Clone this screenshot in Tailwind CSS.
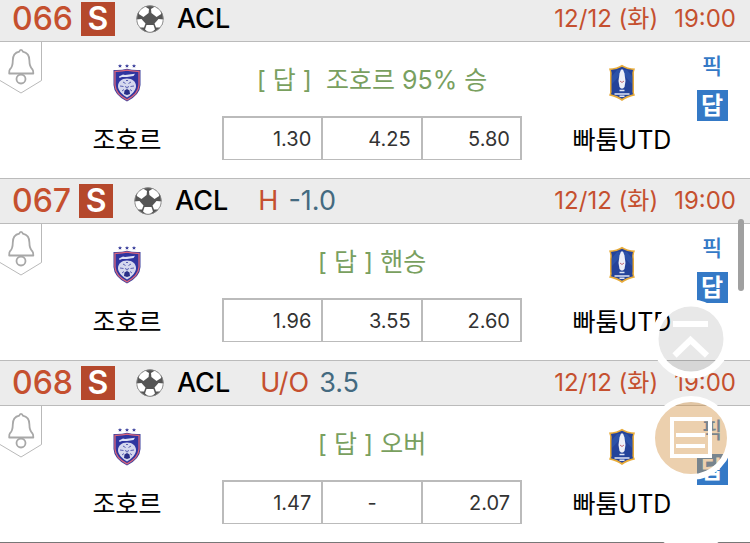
<!DOCTYPE html>
<html lang="ko">
<head>
    <meta charset="UTF-8">
    <meta name="viewport" content="width=device-width, initial-scale=1.0">
    <title>ACL 12/12</title>
    <script src="https://cdn.jsdelivr.net/npm/@tailwindcss/browser@4"></script>
</head>
<body class="bg-white font-['Inter','Noto_Sans_CJK_KR',sans-serif] text-black">

<!-- Shared icons -->
<svg class="hidden">
    <symbol id="ball" viewBox="0 0 28 28">
        <clipPath id="ballClip"><circle cx="14" cy="14" r="13"/></clipPath>
        <circle cx="14" cy="14" r="13.500" fill="#555"/>
        <g clip-path="url(#ballClip)" fill="#fff">
            <path d="M3.500 5L9 1.500L13 4L12.600 8L7.500 12L2.800 9Z"/>
            <path d="M24.500 5L19 1.500L15 4L15.400 8L20.500 12L25.200 9Z"/>
            <path d="M0 14.500L5.500 14L9.500 18.500L8 22.500L3 22.500Z"/>
            <path d="M28 14.500L22.500 14L18.500 18.500L20 22.500L25 22.500Z"/>
            <path d="M10.500 20L17.500 20L19 24.500L16 27L12 27L9 24.500Z"/>
        </g>
        <circle cx="14" cy="14" r="13.300" fill="none" stroke="#8a8a8a" stroke-width=".8"/>
    </symbol>
    <symbol id="bell" viewBox="0 0 42 52">
        <path d="M41.500 0V38.500L21 51L0 38.500" fill="none" stroke="#b9b9b9"/>
        <path d="M21 7.800C20 7.800 19.500 8.500 19.300 9.600C14.500 10.500 12.800 14 12.800 18.500C12.800 24 12 25.500 9.800 27.500C9.200 28.200 9.200 29 9.200 31.500H33.300C33.300 29 33.300 28.200 32.500 27.500C30.300 25.500 29.400 24 29.400 18.500C29.400 14 27.500 10.500 22.800 9.600C22.600 8.500 22 7.800 21 7.800Z" fill="none" stroke="#a8a8a8" stroke-width="1.800" stroke-linejoin="round"/>
        <circle cx="21" cy="37" r="4.500" fill="#fff" stroke="#a8a8a8" stroke-width="1.800"/>
    </symbol>
    <symbol id="johor" viewBox="0 0 28 38">
        <g fill="#3a3f9c">
            <path d="M7 0L7.600 1.200L9 1.300L8 2.200L8.300 3.500L7 2.900L5.700 3.500L6 2.200L5 1.300L6.400 1.200Z"/>
            <path d="M14 0L14.600 1.200L16 1.300L15 2.200L15.300 3.500L14 2.900L12.700 3.500L13 2.200L12 1.300L13.400 1.200Z"/>
            <path d="M21 0L21.600 1.200L23 1.300L22 2.200L22.300 3.500L21 2.900L19.700 3.500L20 2.200L19 1.300L20.400 1.200Z"/>
            <path d="M.5 6Q8 6.500 14 4.800Q20 6.500 27.500 6V21Q27 31 14 37.500Q1 31 .5 21Z"/>
        </g>
        <path d="M2 7.300Q9 7.500 14 6.200Q19 7.500 26 7.300V21Q25.500 30 14 35.800Q2.500 30 2 21Z" fill="#2f35a0" stroke="#d9647a" stroke-width="1.300"/>
        <path d="M6 12.500L10 10.500L12 11L22 9.800L20.500 12L14 13L9 13L6.500 14Z" fill="#dfe2f5"/>
        <path d="M14 14.500C8.500 14.500 5 18 5 22C5 26 8 29 11 31.500L14 33.500L17 31.500C20 29 23 26 23 22C23 18 19.500 14.500 14 14.500Z" fill="#d5d8ee"/>
        <path d="M10 18L12.500 19.500M18 18L15.500 19.500M7 22L10.500 22.500M21 22L17.500 22.500M9 27L11 25.500M19 27L17 25.500M13 16.500H15M12.500 22L13.500 24H14.500L15.500 22" fill="none" stroke="#5a60b2"/>
        <path d="M11.500 26.500L14 25L16.500 26.500L17 30L14 31L11 30Z" fill="#292e87"/>
    </symbol>
    <symbol id="pathum" viewBox="0 0 28 38">
        <path d="M1 4.500Q9 4.500 14 .8Q19 4.500 27 4.500Q25.200 8 26 13V26Q25.500 29 27 31.500Q19 33 14 37Q9 33 1 31.500Q2.500 29 2 26V13Q2.800 8 1 4.500Z" fill="#e8ab38"/>
        <path d="M3 6Q9.500 5.500 14 2.800Q18.500 5.500 25 6Q23.800 9 24.500 13V26Q24 28.500 25 30.300Q18.500 31.500 14 34.800Q9.500 31.500 3 30.300Q4 28.500 3.500 26V13Q4.200 9 3 6Z" fill="#24439a"/>
        <path d="M4 20L14 9L24 20V12L19 6H9L4 12Z" fill="#2c52a8"/>
        <path d="M13 5.500H15L16.500 9.500L17.500 17L16.500 23L15 24.500H13L11.500 23L10.500 17L11.500 9.500Z" fill="#eef0f8"/>
        <path d="M12 17L14 18.500L16 17" fill="none" stroke="#c06a76"/>
        <path d="M11.500 26.500H16.500M6.500 30H21.500M11.500 32.300H16.500" stroke="#dfe5f5" stroke-width="1.500"/>
    </symbol>
</svg>

<div class="relative h-screen overflow-hidden">
<main class="-mt-1 border-b border-[#777]">

    <!-- Game 066 -->
    <section>
        <header class="flex h-[46px] items-center border-y border-[#bbb] bg-[#ececec] pr-[14px] pl-3">
            <h2 class="text-[32px] leading-[34px] font-medium text-[#c5502f]">066</h2>
            <span class="ml-2 size-[34px] bg-[#b5482c] text-center text-[32px] leading-[34px] font-semibold text-white">S</span>
            <svg class="ml-[21px] size-7"><use href="#ball"/></svg>
            <span class="ml-[13px] text-[27px] leading-[34px] font-medium">ACL</span>
            <time class="ml-auto flex gap-4 text-2xl text-[#c5502f]"><span>12/12 (화)</span><span>19:00</span></time>
        </header>
        <div class="grid h-[136px] grid-cols-[54px_1fr_300px_1fr_60px]">
            <button aria-label="알림" class="h-[52px] w-[42px]"><svg class="h-[52px] w-[42px]"><use href="#bell"/></svg></button>
            <div class="flex flex-col items-center gap-[22px] pt-[22px] pr-[22px]">
                <svg class="h-[38px] w-7"><use href="#johor"/></svg>
                <p class="text-[25px] leading-8 whitespace-nowrap">조호르</p>
            </div>
            <div class="flex flex-col gap-5 pt-[22px]">
                <p class="text-center text-[25px] leading-8 whitespace-pre text-[#79a05f]">[ 답 ]  조호르 95% 승</p>
                <table class="h-11 w-full table-fixed border-separate border-spacing-0 border-t-2 border-r border-b border-l border-[#bbb] text-right text-xl text-[#333]">
                    <tr>
                        <td class="border-r border-l border-[#bbb] pr-[10px]">1.30</td>
                        <td class="border-r border-l border-[#bbb] pr-[10px]">4.25</td>
                        <td class="border-r border-l border-[#bbb] pr-[10px]">5.80</td>
                    </tr>
                </table>
            </div>
            <div class="flex flex-col items-center gap-[22px] pt-[22px] pl-8">
                <svg class="h-[38px] w-7"><use href="#pathum"/></svg>
                <p class="text-[25px] leading-8 whitespace-nowrap">빠툼UTD</p>
            </div>
            <div class="flex flex-col items-center gap-3 pt-3 pr-4">
                <button class="text-[22px] leading-6 font-medium text-[#3479c6]">픽</button>
                <button class="size-[31px] bg-[#3479c6] text-2xl leading-[31px] font-bold text-white">답</button>
            </div>
        </div>
    </section>

    <!-- Game 067 -->
    <section>
        <header class="flex h-[46px] items-center border-y border-[#bbb] bg-[#ececec] pr-[14px] pl-3">
            <h2 class="text-[32px] leading-[34px] font-medium text-[#c5502f]">067</h2>
            <span class="ml-2 size-[34px] bg-[#b5482c] text-center text-[32px] leading-[34px] font-semibold text-white">S</span>
            <svg class="ml-[21px] size-7"><use href="#ball"/></svg>
            <span class="ml-[13px] text-[27px] leading-[34px] font-medium">ACL</span>
            <span class="ml-[30px] text-[27px] leading-[34px] text-[#c5502f]">H</span>
            <span class="ml-[10px] text-[27px] leading-[34px] text-[#446a80]">-1.0</span>
            <time class="ml-auto flex gap-4 text-2xl text-[#c5502f]"><span>12/12 (화)</span><span>19:00</span></time>
        </header>
        <div class="grid h-[136px] grid-cols-[54px_1fr_300px_1fr_60px]">
            <button aria-label="알림" class="h-[52px] w-[42px]"><svg class="h-[52px] w-[42px]"><use href="#bell"/></svg></button>
            <div class="flex flex-col items-center gap-[22px] pt-[22px] pr-[22px]">
                <svg class="h-[38px] w-7"><use href="#johor"/></svg>
                <p class="text-[25px] leading-8 whitespace-nowrap">조호르</p>
            </div>
            <div class="flex flex-col gap-5 pt-[22px]">
                <p class="text-center text-[25px] leading-8 whitespace-pre text-[#79a05f]">[ 답 ] 핸승</p>
                <table class="h-11 w-full table-fixed border-separate border-spacing-0 border-t-2 border-r border-b border-l border-[#bbb] text-right text-xl text-[#333]">
                    <tr>
                        <td class="border-r border-l border-[#bbb] pr-[10px]">1.96</td>
                        <td class="border-r border-l border-[#bbb] pr-[10px]">3.55</td>
                        <td class="border-r border-l border-[#bbb] pr-[10px]">2.60</td>
                    </tr>
                </table>
            </div>
            <div class="flex flex-col items-center gap-[22px] pt-[22px] pl-8">
                <svg class="h-[38px] w-7"><use href="#pathum"/></svg>
                <p class="text-[25px] leading-8 whitespace-nowrap">빠툼UTD</p>
            </div>
            <div class="flex flex-col items-center gap-3 pt-3 pr-4">
                <button class="text-[22px] leading-6 font-medium text-[#3479c6]">픽</button>
                <button class="size-[31px] bg-[#3479c6] text-2xl leading-[31px] font-bold text-white">답</button>
            </div>
        </div>
    </section>

    <!-- Game 068 -->
    <section>
        <header class="flex h-[46px] items-center border-y border-[#bbb] bg-[#ececec] pr-[14px] pl-3">
            <h2 class="text-[32px] leading-[34px] font-medium text-[#c5502f]">068</h2>
            <span class="ml-2 size-[34px] bg-[#b5482c] text-center text-[32px] leading-[34px] font-semibold text-white">S</span>
            <svg class="ml-[21px] size-7"><use href="#ball"/></svg>
            <span class="ml-[13px] text-[27px] leading-[34px] font-medium">ACL</span>
            <span class="ml-[30px] text-[27px] leading-[34px] text-[#c5502f]">U/O</span>
            <span class="ml-[10px] text-[27px] leading-[34px] text-[#446a80]">3.5</span>
            <time class="ml-auto flex gap-4 text-2xl text-[#c5502f]"><span>12/12 (화)</span><span>19:00</span></time>
        </header>
        <div class="grid h-[136px] grid-cols-[54px_1fr_300px_1fr_60px]">
            <button aria-label="알림" class="h-[52px] w-[42px]"><svg class="h-[52px] w-[42px]"><use href="#bell"/></svg></button>
            <div class="flex flex-col items-center gap-[22px] pt-[22px] pr-[22px]">
                <svg class="h-[38px] w-7"><use href="#johor"/></svg>
                <p class="text-[25px] leading-8 whitespace-nowrap">조호르</p>
            </div>
            <div class="flex flex-col gap-5 pt-[22px]">
                <p class="text-center text-[25px] leading-8 whitespace-pre text-[#79a05f]">[ 답 ] 오버</p>
                <table class="h-11 w-full table-fixed border-separate border-spacing-0 border-t-2 border-r border-b border-l border-[#bbb] text-right text-xl text-[#333]">
                    <tr>
                        <td class="border-r border-l border-[#bbb] pr-[10px]">1.47</td>
                        <td class="border-r border-l border-[#bbb] text-center">-</td>
                        <td class="border-r border-l border-[#bbb] pr-[10px]">2.07</td>
                    </tr>
                </table>
            </div>
            <div class="flex flex-col items-center gap-[22px] pt-[22px] pl-8">
                <svg class="h-[38px] w-7"><use href="#pathum"/></svg>
                <p class="text-[25px] leading-8 whitespace-nowrap">빠툼UTD</p>
            </div>
            <div class="flex flex-col items-center gap-3 pt-3 pr-4">
                <button class="text-[22px] leading-6 font-medium text-[#3479c6]">픽</button>
                <button class="size-[31px] bg-[#3479c6] text-2xl leading-[31px] font-bold text-white">답</button>
            </div>
        </div>
    </section>
</main>

<!-- Floating buttons, the last one is cut by the bottom edge -->
<div class="absolute top-[299px] right-[17px] bottom-0 flex flex-col items-center overflow-hidden">
    <button aria-label="맨 위로" class="size-20 shrink-0">
        <svg viewBox="0 0 80 80" class="size-20" fill="none" stroke="#fff">
            <circle cx="40" cy="40" r="34" fill="#000" fill-opacity=".09" stroke="none"/>
            <circle cx="40" cy="40" r="36" stroke-width="7"/>
            <path d="M22 25H57M23.500 56.500L39.500 41L56 56.500" stroke-width="6"/>
        </svg>
    </button>
    <button aria-label="글 목록" class="mt-[17px] size-[84px] shrink-0">
        <svg viewBox="0 0 84 84" class="size-[84px]" fill="none" stroke="#fff">
            <circle cx="42" cy="42" r="37" fill="#d39243" fill-opacity=".43" stroke="none"/>
            <circle cx="42" cy="42" r="39" stroke-width="6"/>
            <path d="M23 23H61V60H23ZM27 39H56M27 50H56" stroke-width="4"/>
        </svg>
    </button>
    <button aria-label="더보기" class="mt-[52px] size-20 shrink-0 rounded-full bg-white"></button>
</div>

<!-- Scroll thumb -->
<div class="absolute top-[219px] right-[6px] h-[72px] w-[6px] rounded-full bg-[#a0a0a0]"></div>
</div>

</body>
</html>
